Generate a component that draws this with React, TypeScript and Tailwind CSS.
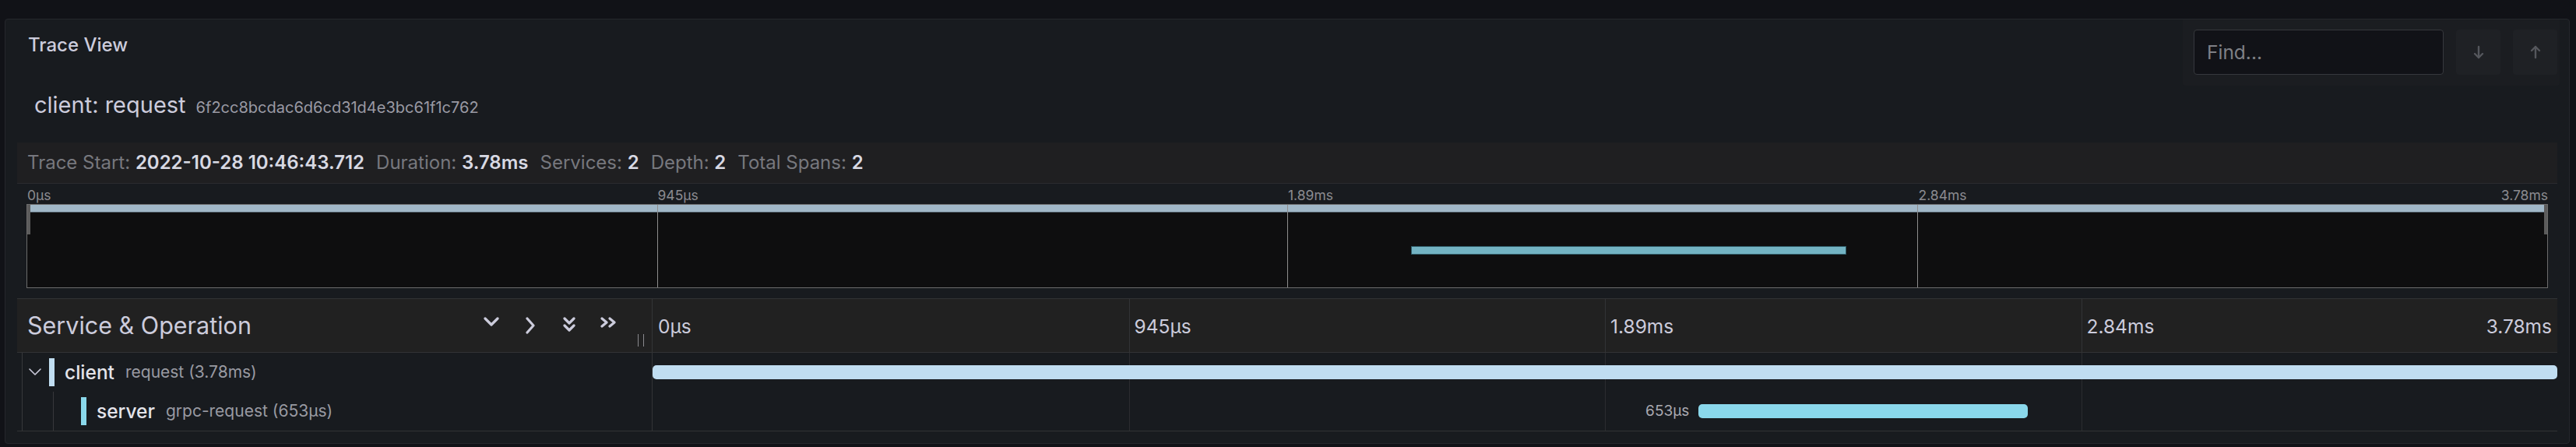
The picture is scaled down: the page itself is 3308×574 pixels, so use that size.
const ticks = ["0µs", "945µs", "1.89ms", "2.84ms", "3.78ms"];
const total = 3780;

const spans = [
  { id: "a", service: "client", op: "request (3.78ms)", start: 0, duration: 3780, depth: 0, color: "#c0ddf1", label: "" },
  { id: "b", service: "server", op: "grpc-request (653µs)", start: 2076, duration: 653, depth: 1, color: "#8ad8eb", label: "653µs" },
];

const Chevron = ({ points, w, h, sw = 3.2 }: { points: string[]; w: number; h: number; sw?: number }) => (
  <svg width={w} height={h} viewBox={`0 0 ${w} ${h}`} fill="none" stroke="#ccccdc" strokeWidth={sw} strokeLinecap="round" strokeLinejoin="round">
    {points.map((p) => (
      <polyline key={p} points={p} />
    ))}
  </svg>
);

const Arrow = ({ up }: { up?: boolean }) => (
  <svg width="14" height="18" viewBox="0 0 14 18" fill="none" stroke="#55575d" strokeWidth="2.4" strokeLinecap="round" strokeLinejoin="round" className={up ? "rotate-180" : ""}>
    <line x1="7" y1="2" x2="7" y2="16" />
    <polyline points="2,11 7,16 12,11" />
  </svg>
);

const Header = () => (
  <div className="flex justify-between">
    <div className="ml-[29px] mt-[21px] text-[24px] leading-[24px] font-medium text-[#ccccdc]">Trace View</div>
    <div className="-mt-px mr-[12px] flex h-[86px] w-[484px] items-start gap-[16px] rounded-b-[4px] bg-[#1b1d21] pl-[14px] pt-[14px]">
      <div className="flex h-[58px] w-[321px] items-center rounded-[4px] border border-[#36383d] bg-[#111217] pl-[16px] text-[24.5px] text-[#7f8086]">
        Find...
      </div>
      <div className="flex h-[58px] w-[57px] items-center justify-center rounded-[4px] bg-[#1f2125]">
        <Arrow />
      </div>
      <div className="flex h-[58px] w-[57px] items-center justify-center rounded-[4px] bg-[#1f2125]">
        <Arrow up />
      </div>
    </div>
  </div>
);

const Summary = () => {
  const items = [
    ["Trace Start:", "2022-10-28 10:46:43.712"],
    ["Duration:", "3.78ms"],
    ["Services:", "2"],
    ["Depth:", "2"],
    ["Total Spans:", "2"],
  ];
  return (
    <div className="mt-[34px] flex h-[53px] items-center gap-[15px] border-b border-[#2a2b2e] bg-[#1f1f21] pl-[13px] text-[24px] leading-[24px]">
      {items.map(([k, v]) => (
        <span key={k} className="text-[#77787e]">
          {k} <span className="font-semibold text-[#d8d9e3]">{v}</span>
        </span>
      ))}
    </div>
  );
};

const Minimap = () => {
  const server = spans[1];
  return (
    <div className="mx-[12px]">
      <div className="relative h-[26px] text-[17.5px] leading-[17.5px] text-[#8b8b90]">
        {ticks.map((t, i) =>
          i < 4 ? (
            <span key={t} className="absolute top-[6px] pl-px" style={{ left: `${i * 25}%` }}>
              {t}
            </span>
          ) : (
            <span key={t} className="absolute right-0 top-[6px]">
              {t}
            </span>
          )
        )}
      </div>
      <div className="relative h-[108px] border border-[#6c6c6c] bg-[#0e0e0f]">
        <div className="h-[10px] border-b border-[#4a5760] bg-[#a1b8c8]" />
        {[25, 50, 75].map((p) => (
          <div key={p} className="absolute top-0 bottom-0 w-px bg-[#8d8d8d]" style={{ left: `${p}%` }} />
        ))}
        <div className="absolute left-0 top-0 h-[38px] w-[4px] bg-[#5c5c5c]" />
        <div className="absolute right-0 top-0 h-[38px] w-[4px] bg-[#5c5c5c]" />
        <div
          className="absolute top-[53px] h-[11px] border border-[#2e5a66] bg-[#73b3c3]"
          style={{ left: `${(server.start / total) * 100}%`, width: `${(server.duration / total) * 100}%` }}
        />
      </div>
    </div>
  );
};

const GridLines = ({ color }: { color: string }) => (
  <>
    {[25, 50, 75].map((p) => (
      <div key={p} className={`absolute top-0 bottom-0 w-px ${color}`} style={{ left: `${p}%` }} />
    ))}
  </>
);

const TableHeader = () => (
  <div className="flex h-[70px] border-y border-[#323335] bg-[#212121]">
    <div className="flex w-[816px] items-center border-r border-[#333436]">
      <div className="flex-1 pl-[13px] text-[30.5px] leading-[32px] text-[#ccccdc]">Service &amp; Operation</div>
      <div className="flex">
        <div className="flex w-[50px] justify-center">
          <Chevron w={20} h={12} points={["2,2 10,10 18,2"]} />
        </div>
        <div className="flex w-[50px] justify-center">
          <Chevron w={12} h={22} points={["2,2 10,11 2,20"]} />
        </div>
        <div className="flex w-[50px] justify-center">
          <Chevron w={16} h={20} points={["2,2 8,8 14,2", "2,11 8,17 14,11"]} />
        </div>
        <div className="flex w-[50px] justify-center">
          <Chevron w={21} h={14} points={["2,2 8,7 2,12", "12,2 18,7 12,12"]} />
        </div>
      </div>
      <div className="mb-[7px] ml-[13px] mr-[10px] flex h-[16px] gap-[6px] self-end">
        <div className="w-px bg-[#8a8a8e]" />
        <div className="w-px bg-[#8a8a8e]" />
      </div>
    </div>
    <div className="relative flex-1 text-[24.5px] leading-[24px] text-[#ccccdc]">
      <GridLines color="bg-[#323335]" />
      {ticks.map((t, i) =>
        i < 4 ? (
          <span key={t} className="absolute top-[23px] pl-[7px]" style={{ left: `${i * 25}%` }}>
            {t}
          </span>
        ) : (
          <span key={t} className="absolute right-[7px] top-[23px]">
            {t}
          </span>
        )
      )}
    </div>
  </div>
);

const SpanRow = ({ span }: { span: (typeof spans)[number] }) => {
  const left = (span.start / total) * 100;
  const width = (span.duration / total) * 100;
  return (
    <div className="flex h-[50px]">
      <div className="flex w-[816px] items-center border-r border-[#333436]">
        <div className="ml-[6px] w-px self-stretch bg-[#37383b]" />
        {span.depth === 0 ? (
          <div className="flex w-[31px] justify-center">
            <Chevron w={16} h={10} sw={1.6} points={["1,1 8,8 15,1"]} />
          </div>
        ) : (
          <>
            <div className="w-[39px]" />
            <div className="w-px self-stretch bg-[#37383b]" />
            <div className="w-[35px]" />
          </>
        )}
        <div className={`h-[36px] w-[7px] ${span.depth === 0 ? "ml-[3px]" : ""}`} style={{ backgroundColor: span.color }} />
        <span className="ml-[13px] text-[24.5px] leading-[24px] font-medium text-[#e4e4ea]">{span.service}</span>
        <span className="ml-[14px] text-[21px] leading-[24px] text-[#999aa2]">{span.op}</span>
      </div>
      <div className="relative flex-1">
        <GridLines color="bg-[#2b2c2f]" />
        {span.label && (
          <div className="absolute top-0 bottom-0 left-0 flex items-center justify-end pr-[12px] text-[19px] leading-[20px] text-[#a9a9b0]" style={{ width: `${left}%` }}>
            {span.label}
          </div>
        )}
        <div className="absolute top-[16px] h-[18px] rounded-[5px]" style={{ left: `${left}%`, width: `${width}%`, backgroundColor: span.color }} />
      </div>
    </div>
  );
};

export default function App() {
  return (
    <div className="h-[574px] w-[3308px] bg-[#111217] pl-[6px] pr-[8px] pt-[24px] font-['Inter','Noto_Sans',sans-serif]">
      <div className="flex h-[546px] flex-col overflow-hidden rounded-[4px] border border-[#25272c] bg-[#181b1f]">
        <Header />
        <div className="ml-[37px] mt-[11px] flex h-[28px] items-baseline">
          <span className="text-[29px] leading-[28px] text-[#ccccdc]">client: request</span>
          <span className="ml-[13px] text-[20px] leading-[20px] text-[#9a9aa4]">6f2cc8bcdac6d6cd31d4e3bc61f1c762</span>
        </div>
        <div className="mx-[15px]">
          <Summary />
          <Minimap />
          <div className="mt-[13px]">
            <TableHeader />
            <div className="border-b border-[#323335]">
              {spans.map((s) => (
                <SpanRow key={s.id} span={s} />
              ))}
            </div>
          </div>
        </div>
      </div>
    </div>
  );
}
